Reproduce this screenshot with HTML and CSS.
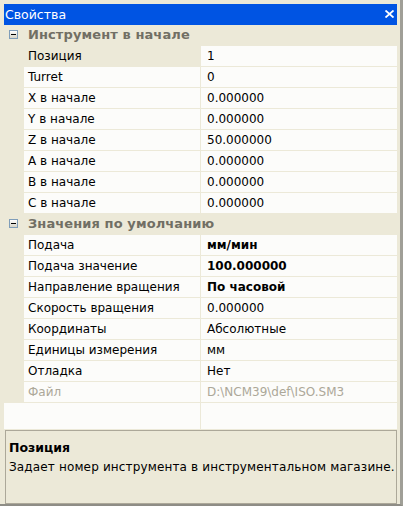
FILE: index.html
```html
<!DOCTYPE html>
<html>
<head>
<meta charset="utf-8">
<link rel="stylesheet" href="styles.css">
</head>
<body>
<div class="window">
  <div class="titlebar">
    <span class="title">Свойства</span>
    <svg class="close" width="9" height="8" viewBox="0 0 9 8"><path d="M0.5 0.5 L8.5 7.5 M8.5 0.5 L0.5 7.5" stroke="#fff" stroke-width="1.8"/></svg>
  </div>
  <div class="grid">
    <div class="cat"><span class="toggle"></span><span class="cat-name">Инструмент в начале</span></div>
    <div class="row sel"><div class="gut"></div><div class="name">Позиция</div><div class="val">1</div></div>
    <div class="row"><div class="gut"></div><div class="name">Turret</div><div class="val">0</div></div>
    <div class="row"><div class="gut"></div><div class="name">X в начале</div><div class="val">0.000000</div></div>
    <div class="row"><div class="gut"></div><div class="name">Y в начале</div><div class="val">0.000000</div></div>
    <div class="row"><div class="gut"></div><div class="name">Z в начале</div><div class="val">50.000000</div></div>
    <div class="row"><div class="gut"></div><div class="name">A в начале</div><div class="val">0.000000</div></div>
    <div class="row"><div class="gut"></div><div class="name">B в начале</div><div class="val">0.000000</div></div>
    <div class="row"><div class="gut"></div><div class="name">C в начале</div><div class="val">0.000000</div></div>
    <div class="cat"><span class="toggle"></span><span class="cat-name">Значения по умолчанию</span></div>
    <div class="row"><div class="gut"></div><div class="name">Подача</div><div class="val bold">мм/мин</div></div>
    <div class="row"><div class="gut"></div><div class="name">Подача значение</div><div class="val bold">100.000000</div></div>
    <div class="row"><div class="gut"></div><div class="name">Направление вращения</div><div class="val bold">По часовой</div></div>
    <div class="row"><div class="gut"></div><div class="name">Скорость вращения</div><div class="val">0.000000</div></div>
    <div class="row"><div class="gut"></div><div class="name">Координаты</div><div class="val">Абсолютные</div></div>
    <div class="row"><div class="gut"></div><div class="name">Единицы измерения</div><div class="val">мм</div></div>
    <div class="row"><div class="gut"></div><div class="name">Отладка</div><div class="val">Нет</div></div>
    <div class="row dis"><div class="gut"></div><div class="name">Файл</div><div class="val">D:\NCM39\def\ISO.SM3</div></div>
    <div class="empty"><div class="ename"></div><div class="eval"></div></div>
  </div>
  <div class="desc">
    <div class="desc-title">Позиция</div>
    <div class="desc-text">Задает номер инструмента в инструментальном магазине.</div>
  </div>
</div>
</body>
</html>
```

FILE: styles.css
```css
html, body {
  margin: 0;
  padding: 0;
  background: #ece9d8;
}
.window {
  width: 403px;
  height: 506px;
  box-sizing: border-box;
  padding: 4px 3px 0 4px;
  background: #ece9d8;
  border-right: 3px solid #a09f97;
  border-bottom: 2px solid #8e8d86;
  display: flex;
  flex-direction: column;
  font-family: "DejaVu Sans", sans-serif;
  font-size: 12px;
  color: #000;
}
.titlebar {
  height: 22px;
  background: #0054e3;
  display: flex;
  align-items: center;
  justify-content: space-between;
  padding: 0 3px 0 1px;
  color: #fff;
  font-size: 12.5px;
}
.close { display: block; }
.grid {
  display: flex;
  flex-direction: column;
  background: #fcfcfa;
}
.cat {
  height: 20px;
  border-bottom: 1px solid #ece9d8;
  background: #ece9d8;
  display: flex;
  align-items: center;
}
.toggle {
  flex: none;
  width: 9px;
  height: 9px;
  box-sizing: border-box;
  margin-left: 5px;
  margin-right: 10px;
  border: 1px solid #7f9db9;
  background: linear-gradient(#fff, #d6d3c6);
  position: relative;
}
.toggle::after {
  content: "";
  position: absolute;
  left: 1px;
  top: 3px;
  width: 5px;
  height: 1px;
  background: #000;
}
.cat-name {
  font-weight: bold;
  font-size: 13px;
  letter-spacing: 0.1px;
  color: #716f64;
}
.row {
  height: 21px;
  display: flex;
}
.gut {
  width: 20px;
  background: #ece9d8;
}
.name {
  width: 172px;
  padding-left: 4px;
  border-bottom: 1px solid #ece9d8;
  border-right: 1px solid #ece9d8;
  display: flex;
  align-items: center;
  white-space: nowrap;
}
.val {
  flex: 1;
  padding-left: 6px;
  border-bottom: 1px solid #ece9d8;
  display: flex;
  align-items: center;
  white-space: nowrap;
}
.row.sel .name { background: #ece9d8; }
.bold { font-weight: bold; }
.dis .name, .dis .val { color: #aca899; }
.empty {
  height: 26px;
  display: flex;
}
.ename { width: 196px; border-right: 1px solid #ece9d8; }
.eval { flex: 1; }
.desc {
  margin: 1px 0 0 1px;
  height: 67px;
  border: 1px solid #aca899;
  padding: 9px 0 0 3px;
  background: #ece9d8;
}
.desc-title { font-weight: bold; font-size: 12.5px; }
.desc-text { margin-top: 5px; letter-spacing: 0.15px; white-space: nowrap; }
```
